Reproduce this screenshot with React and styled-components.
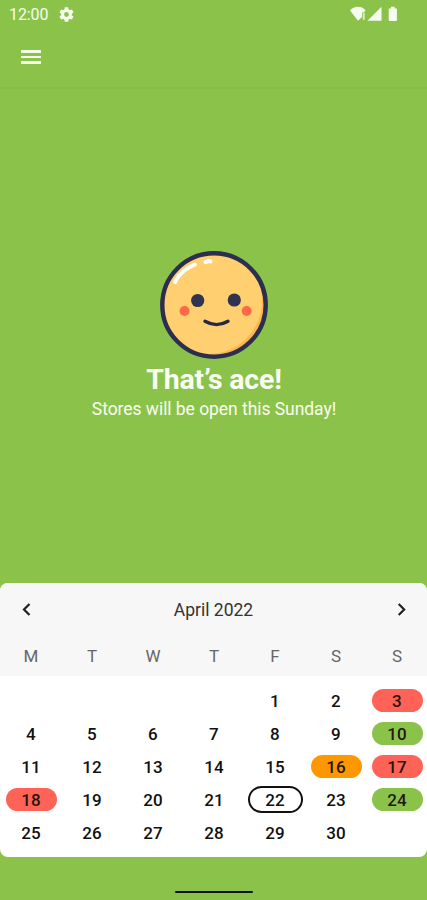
import React, { useState } from 'react';
import styled, { createGlobalStyle } from 'styled-components';

const GlobalStyle = createGlobalStyle`
  * {
    box-sizing: border-box;
  }

  body {
    margin: 0;
    background-color: #8bc34a;
    font-family: Roboto, 'Liberation Sans', sans-serif;
  }
`;

const Screen = styled.div`
  display: flex;
  flex-direction: column;
  width: 427px;
  height: 900px;
  overflow: hidden;
  background-color: #8bc34a;
`;

const StatusBar = styled.div`
  display: flex;
  align-items: center;
  height: 28px;
  padding: 0 27px 0 9px;
  color: #f7fbef;
`;

const Clock = styled.span`
  width: 50px;
  padding-top: 1px;
  font-size: 16px;
  letter-spacing: -0.1px;
  line-height: 27px;
`;

const StatusIcons = styled.div`
  display: flex;
  margin-left: auto;
`;

const Toolbar = styled.header`
  display: flex;
  align-items: center;
  height: 61px;
  padding: 0 20px 1px;
  border-bottom: 2px solid #86bc48;
`;

const MenuButton = styled.button`
  display: flex;
  flex-direction: column;
  gap: 3px;
  width: 22px;
  padding: 0 1px;
  background: none;
  border: none;
  cursor: pointer;

  span {
    height: 2.6px;
    background-color: #f4faea;
  }
`;

const Message = styled.main`
  display: flex;
  flex-direction: column;
  align-items: center;
  height: 494px;
  padding: 161px 0 0 1px;
  color: #f9fdf2;
`;

const Title = styled.h1`
  margin: 4px 0 0;
  font-size: 28.5px;
  font-weight: 700;
  line-height: 32px;
  letter-spacing: -0.2px;
`;

const Subtitle = styled.p`
  margin: 2px 0 0;
  font-size: 17.5px;
  line-height: 22px;
  letter-spacing: -0.05px;
`;

const CalendarCard = styled.section`
  height: 274px;
  border-radius: 8px;
  overflow: hidden;
  background-color: #fff;
`;

const CalendarHeader = styled.div`
  height: 93px;
  background-color: #f7f7f7;
`;

const MonthRow = styled.div`
  display: flex;
  align-items: center;
  justify-content: space-between;
  height: 53px;
  padding: 0 14px;
`;

const MonthName = styled.span`
  font-size: 17.5px;
  color: #333;
`;

const ArrowButton = styled.button`
  display: flex;
  padding: 0;
  background: none;
  border: none;
  color: #222;
  cursor: pointer;
`;

const WeekRow = styled.div`
  display: grid;
  grid-template-columns: repeat(7, 61px);
  height: 40px;
`;

const WeekDay = styled.span`
  padding-left: 1px;
  font-size: 17px;
  line-height: 40px;
  text-align: center;
  color: #666;
`;

const Days = styled.div`
  display: grid;
  grid-template-columns: repeat(7, 61px);
  grid-auto-rows: 32.8px;
  padding-top: 8.5px;
`;

const DayCell = styled.div`
  display: flex;
  align-items: center;
  justify-content: center;
  padding-left: 1px;
`;

const colors = {
  closed: '#ff6257',
  open: '#8bc34a',
  holiday: '#ff9800',
};

const Day = styled.span`
  width: ${props => (props.$today ? '55px' : '51px')};
  height: ${props => (props.$today ? '27px' : '23px')};
  border: ${props => (props.$today ? '2px solid #111' : 'none')};
  border-radius: 14px;
  background-color: ${props => colors[props.$status] || 'transparent'};
  color: ${props => (props.$status ? '#24150c' : '#111')};
  font-size: 17px;
  font-weight: 500;
  letter-spacing: 0.2px;
  line-height: 25px;
  text-align: center;
  flex-shrink: 0;
`;

const HomeIndicator = styled.div`
  width: 78px;
  height: 2px;
  margin: 34px auto 0;
  border-radius: 1px;
  background-color: #101508;
`;

const GearIcon = () => (
  <svg width="15" height="15" viewBox="2 2 20 20" fill="currentColor">
    <path d="M19.14 12.94c.04-.3.06-.61.06-.94 0-.32-.02-.64-.07-.94l2.03-1.58a.49.49 0 0 0 .12-.61l-1.92-3.32a.49.49 0 0 0-.59-.22l-2.39.96c-.5-.38-1.03-.7-1.62-.94l-.36-2.54a.48.48 0 0 0-.48-.41h-3.84a.48.48 0 0 0-.47.41l-.36 2.54c-.59.24-1.13.57-1.62.94l-2.39-.96a.48.48 0 0 0-.59.22L2.74 8.87a.48.48 0 0 0 .12.61l2.03 1.58c-.05.3-.09.63-.09.94s.02.64.07.94l-2.03 1.58a.49.49 0 0 0-.12.61l1.92 3.32c.12.22.37.29.59.22l2.39-.96c.5.38 1.03.7 1.62.94l.36 2.54c.05.24.24.41.48.41h3.84c.24 0 .44-.17.47-.41l.36-2.54c.59-.24 1.13-.56 1.62-.94l2.39.96c.22.08.47 0 .59-.22l1.92-3.32a.48.48 0 0 0-.12-.61l-2.01-1.58zM12 15.2A3.2 3.2 0 1 1 12 8.8a3.2 3.2 0 0 1 0 6.4z" />
  </svg>
);

// wifi, mobile signal and battery
const SignalIcons = () => (
  <svg width="50" height="16" viewBox="0 0 50 16" fill="currentColor">
    <path d="M0 4.5C4-.4 11.500-.4 15.500 4.200L14 6.500H12v4.500L8 14.800z" />
    <path d="M12.700 7.500l2-.7v6.900h-1.900v-4z" opacity=".75" />
    <path d="M31.500.8v13.900h-14z" />
    <path d="M38.700 2.500h2.200V.8h3.800v1.700h2.200V14a1 1 0 0 1-1 1h-6.200a1 1 0 0 1-1-1z" />
  </svg>
);

const Face = () => (
  <svg width="110" height="110" viewBox="0 0 110 110">
    <defs>
      <clipPath id="head">
        <circle cx="55" cy="55" r="50" />
      </clipPath>
    </defs>
    <circle cx="55" cy="55" r="51.7" fill="#ffb54c" />
    <circle cx="50" cy="51" r="53" fill="#ffcf70" clipPath="url(#head)" />
    <circle cx="55" cy="55" r="51.7" fill="none" stroke="#2b2e50" strokeWidth="4.4" />
    <path d="M16 32Q22 20 36 14.5" fill="none" stroke="#fff" strokeWidth="4" strokeLinecap="round" />
    <path d="M46.5 12Q49 11 51.5 11.5" fill="none" stroke="#fff" strokeWidth="4" strokeLinecap="round" />
    <circle cx="38.7" cy="50.500" r="6.600" fill="#303451" />
    <circle cx="75.300" cy="50" r="6.600" fill="#303451" />
    <circle cx="25.500" cy="61" r="5" fill="#ff6849" />
    <circle cx="87.700" cy="61" r="5" fill="#ff6849" />
    <path d="M46 71.300Q57.500 78 69 71.300" fill="none" stroke="#252943" strokeWidth="3.400" strokeLinecap="round" />
  </svg>
);

const Arrow = ({ right }) => (
  <svg width="24" height="24" viewBox="0 0 24 24" fill="none" stroke="currentColor" strokeWidth="2.2">
    <path d={right ? 'M9.7 6l5.500 5.500-5.500 5.500' : 'M15.500 6L10 11.500l5.500 5.500'} />
  </svg>
);

const weekDays = ['M', 'T', 'W', 'T', 'F', 'S', 'S'];
const statuses = {
  3: 'closed',
  10: 'open',
  16: 'holiday',
  17: 'closed',
  18: 'closed',
  24: 'open',
};

const months = [
  'January', 'February', 'March', 'April', 'May', 'June',
  'July', 'August', 'September', 'October', 'November', 'December',
];

const Calendar = () => {
  const [date, setDate] = useState(new Date(2022, 3, 1));
  const year = date.getFullYear();
  const month = date.getMonth();
  const isApril = year === 2022 && month === 3;
  const offset = (date.getDay() + 6) % 7;
  const total = new Date(year, month + 1, 0).getDate();

  const changeMonth = step => setDate(new Date(year, month + step, 1));

  return (
    <CalendarCard>
      <CalendarHeader>
        <MonthRow>
          <ArrowButton aria-label="Previous month" onClick={() => changeMonth(-1)}>
            <Arrow />
          </ArrowButton>
          <MonthName>{`${months[month]} ${year}`}</MonthName>
          <ArrowButton aria-label="Next month" onClick={() => changeMonth(1)}>
            <Arrow right />
          </ArrowButton>
        </MonthRow>
        <WeekRow>
          {weekDays.map((day, i) => (
            <WeekDay key={i}>{day}</WeekDay>
          ))}
        </WeekRow>
      </CalendarHeader>
      <Days>
        {Array.from({ length: offset }, (_, i) => (
          <DayCell key={`empty-${i}`} />
        ))}
        {Array.from({ length: total }, (_, i) => i + 1).map(day => (
          <DayCell key={day}>
            <Day
              $status={isApril ? statuses[day] : undefined}
              $today={isApril && day === 22}
            >
              {day}
            </Day>
          </DayCell>
        ))}
      </Days>
    </CalendarCard>
  );
};

const App = () => (
  <>
    <GlobalStyle />
    <Screen>
      <StatusBar>
        <Clock>12:00</Clock>
        <GearIcon />
        <StatusIcons>
          <SignalIcons />
        </StatusIcons>
      </StatusBar>
      <Toolbar>
        <MenuButton aria-label="Menu">
          <span />
          <span />
          <span />
        </MenuButton>
      </Toolbar>
      <Message>
        <Face />
        <Title>That’s ace!</Title>
        <Subtitle>Stores will be open this Sunday!</Subtitle>
      </Message>
      <Calendar />
      <HomeIndicator />
    </Screen>
  </>
);

export default App;
